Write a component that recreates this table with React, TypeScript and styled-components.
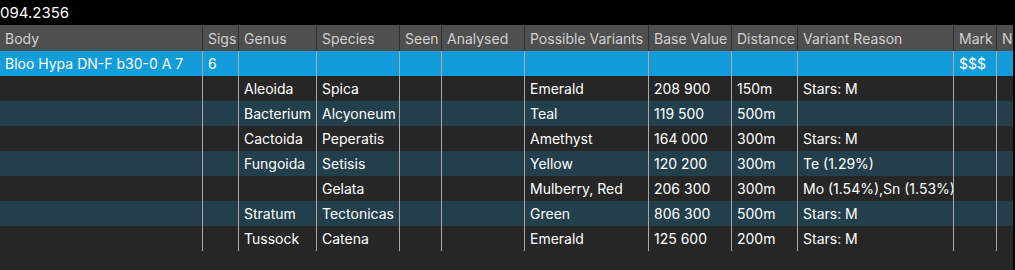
import React from 'react';
import styled, { createGlobalStyle } from 'styled-components';

const GlobalStyle = createGlobalStyle`
  html, body {
    margin: 0;
    padding: 0;
    background: #000;
  }
  body {
    width: 1015px;
    height: 270px;
    overflow: hidden;
    font-family: Inter, "Noto Sans", sans-serif;
  }
`;

const COLUMNS = '203px 36px 78px 83px 42px 83px 124px 83px 66px 156px 43px 16px';

const Page = styled.div`
  display: flex;
  flex-direction: column;
  width: 1015px;
  height: 270px;
`;

const TopBar = styled.div`
  height: 25px;
  display: flex;
  align-items: center;
  color: #fff;
  font-size: 15px;
  padding-left: 0;
  white-space: nowrap;
  overflow: hidden;
`;

const Grid = styled.div`
  flex: 1;
  width: 1013px;
  background: #262626;
  overflow: hidden;
`;

const Row = styled.div<{ $variant: 'head' | 'selected' | 'dark' | 'alt' }>`
  display: grid;
  grid-template-columns: ${COLUMNS};
  height: ${p => (p.$variant === 'head' ? '26px' : '25px')};
  background: ${p =>
    p.$variant === 'head' ? '#4f4f4f' :
    p.$variant === 'selected' ? '#139cda' :
    p.$variant === 'alt' ? '#233f4c' : '#262626'};
  color: ${p => (p.$variant === 'head' ? '#d0d0d0' : '#ffffff')};
`;

const Cell = styled.div<{ $head?: boolean }>`
  display: flex;
  align-items: center;
  padding-left: 5px;
  font-size: 14px;
  white-space: nowrap;
  overflow: hidden;
  border-right: 1px solid ${p => (p.$head ? '#2e2e2e' : '#a9a9a9')};
  &:last-child {
    border-right: none;
  }
`;

const headers = ['Body', 'Sigs', 'Genus', 'Species', 'Seen', 'Analysed', 'Possible Variants', 'Base Value', 'Distance', 'Variant Reason', 'Mark', 'Notes'];

const rows: string[][] = [
  ['', '', 'Aleoida', 'Spica', '', '', 'Emerald', '208 900', '150m', 'Stars: M', '', ''],
  ['', '', 'Bacterium', 'Alcyoneum', '', '', 'Teal', '119 500', '500m', '', '', ''],
  ['', '', 'Cactoida', 'Peperatis', '', '', 'Amethyst', '164 000', '300m', 'Stars: M', '', ''],
  ['', '', 'Fungoida', 'Setisis', '', '', 'Yellow', '120 200', '300m', 'Te (1.29%)', '', ''],
  ['', '', '', 'Gelata', '', '', 'Mulberry, Red', '206 300', '300m', 'Mo (1.54%),Sn (1.53%)', '', ''],
  ['', '', 'Stratum', 'Tectonicas', '', '', 'Green', '806 300', '500m', 'Stars: M', '', ''],
  ['', '', 'Tussock', 'Catena', '', '', 'Emerald', '125 600', '200m', 'Stars: M', '', ''],
];

const selected = ['Bloo Hypa DN-F b30-0 A 7', '6', '', '', '', '', '', '', '', '', '$$$', ''];

export default function App() {
  return (
    <>
      <GlobalStyle />
      <Page>
        <TopBar>094.2356</TopBar>
        <Grid>
          <Row $variant="head">
            {headers.map(h => (
              <Cell key={h} $head>{h}</Cell>
            ))}
          </Row>
          <Row $variant="selected">
            {selected.map((v, i) => (
              <Cell key={i}>{v}</Cell>
            ))}
          </Row>
          {rows.map((r, ri) => (
            <Row key={ri} $variant={ri % 2 === 0 ? 'dark' : 'alt'}>
              {r.map((v, i) => (
                <Cell key={i}>{v}</Cell>
              ))}
            </Row>
          ))}
        </Grid>
      </Page>
    </>
  );
}
